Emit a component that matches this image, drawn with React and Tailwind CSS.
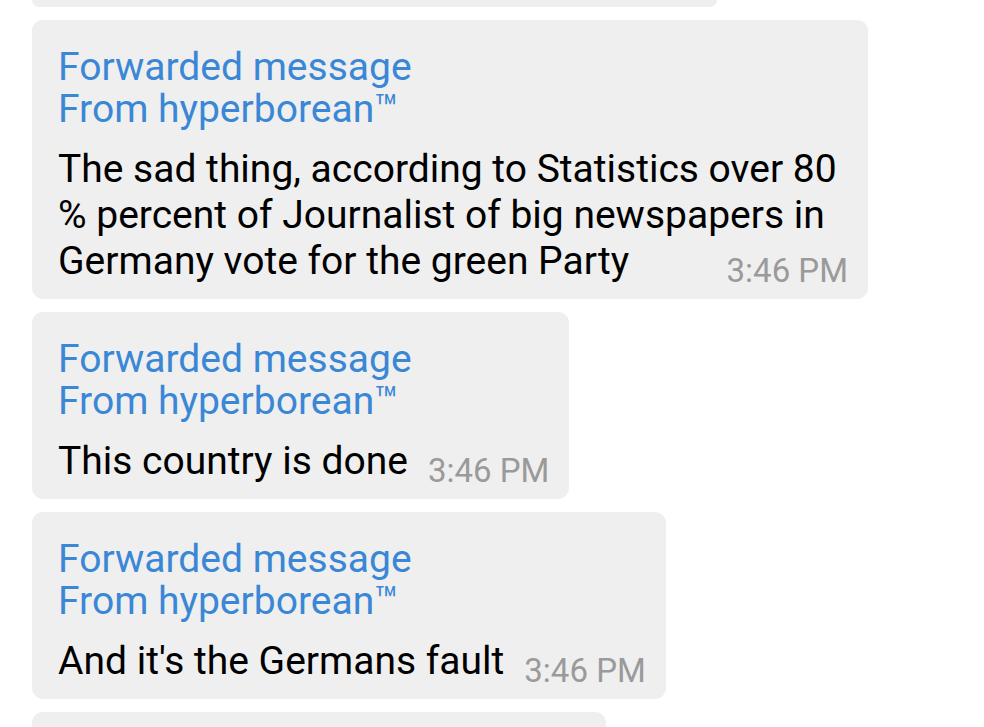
import React from 'react';

const messages = [
  {
    id: 1,
    text: 'The sad thing, according to Statistics over 80 % percent of Journalist of big newspapers in Germany vote for the green Party',
    time: '3:46 PM',
  },
  { id: 2, text: 'This country is done', time: '3:46 PM' },
  { id: 3, text: "And it's the Germans fault", time: '3:46 PM' },
];

function ForwardedBubble({ text, time }) {
  return (
    <div className="w-fit max-w-[836px] bg-[#efefef] rounded-[11px] pl-[26px] pr-[20px] pt-[26px] pb-[12px]">
      <div className="text-[39px] leading-[42px] text-[#3a87d6]">
        <div>Forwarded message</div>
        <div>From hyperborean™</div>
      </div>
      <div className="flow-root mt-4 text-[39px] leading-[46px] text-black">
        <span>{text}</span>
        <span className="float-right ml-[20px] mt-[17px] text-[33px] leading-[32px] text-[#9a9a9a]">{time}</span>
      </div>
    </div>
  );
}

export default function App() {
  return (
    <div
      className="h-[727px] w-[984px] overflow-hidden bg-white flex flex-col gap-[13px] pl-[32px]"
      style={{ fontFamily: 'Roboto, "Noto Sans", sans-serif' }}
    >
      {/* previous bubble, cut off at the top */}
      <div className="h-[7px] w-[685px] shrink-0 bg-[#efefef] rounded-b-[11px]" />
      {messages.map((m) => (
        <ForwardedBubble key={m.id} text={m.text} time={m.time} />
      ))}
      {/* next bubble, cut off at the bottom */}
      <div className="h-[40px] w-[574px] shrink-0 bg-[#efefef] rounded-t-[11px]" />
    </div>
  );
}
